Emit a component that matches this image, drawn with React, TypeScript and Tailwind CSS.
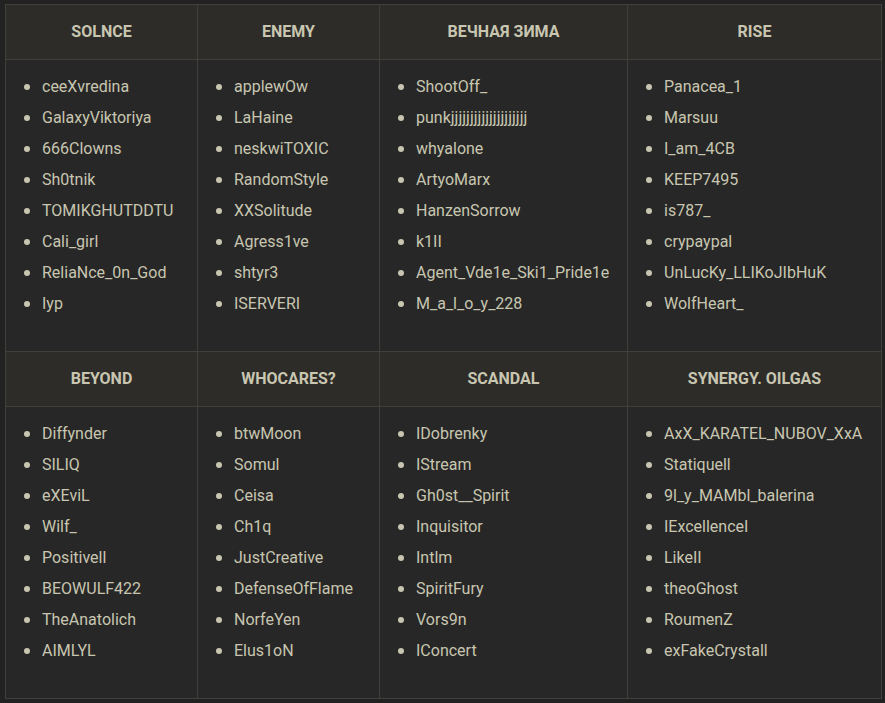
import React from "react";

interface Team {
  name: string;
  players: string[];
}

const ROWS: Team[][] = [
  [
    {
      name: "SOLNCE",
      players: ["ceeXvredina", "GalaxyViktoriya", "666Clowns", "Sh0tnik", "TOMIKGHUTDDTU", "Cali_girl", "ReliaNce_0n_God", "Iyp"],
    },
    {
      name: "ENEMY",
      players: ["applewOw", "LaHaine", "neskwiTOXIC", "RandomStyle", "XXSolitude", "Agress1ve", "shtyr3", "ISERVERI"],
    },
    {
      name: "ВЕЧНАЯ ЗИМА",
      players: ["ShootOff_", "punk" + "j".repeat(20), "whyalone", "ArtyoMarx", "HanzenSorrow", "k1II", "Agent_Vde1e_Ski1_Pride1e", "M_a_l_o_y_228"],
    },
    {
      name: "RISE",
      players: ["Panacea_1", "Marsuu", "I_am_4CB", "KEEP7495", "is787_", "crypaypal", "UnLucKy_LLIKoJIbHuK", "WolfHeart_"],
    },
  ],
  [
    {
      name: "BEYOND",
      players: ["Diffynder", "SILIQ", "eXEviL", "Wilf_", "Positivell", "BEOWULF422", "TheAnatolich", "AIMLYL"],
    },
    {
      name: "WHOCARES?",
      players: ["btwMoon", "Somul", "Ceisa", "Ch1q", "JustCreative", "DefenseOfFlame", "NorfeYen", "Elus1oN"],
    },
    {
      name: "SCANDAL",
      players: ["IDobrenky", "IStream", "Gh0st__Spirit", "Inquisitor", "Intlm", "SpiritFury", "Vors9n", "IConcert"],
    },
    {
      name: "SYNERGY. OILGAS",
      players: ["AxX_KARATEL_NUBOV_XxA", "Statiquell", "9l_y_MAMbl_balerina", "IExcellenceI", "LikeII", "theoGhost", "RoumenZ", "exFakeCrystall"],
    },
  ],
];

const COL_WIDTHS = ["w-[192px]", "w-[182px]", "w-[248px]", "w-[254px]"];

export default function App() {
  return (
    <div className="min-h-screen bg-[#222222] pl-[5px] pt-[4px] font-['Roboto','Liberation_Sans',sans-serif] text-[#c8c6b0]">
      <div className="w-[877px] border-l border-t border-[#403f3a]">
        {ROWS.map((row, ri) => (
          <div key={ri} className="flex flex-col">
            {/* Header row */}
            <div className="flex">
              {row.map((team, ci) => (
                <div
                  key={team.name}
                  className={`${COL_WIDTHS[ci]} h-[55px] flex items-center justify-center border-r border-b border-[#403f3a] bg-[#2d2c29] text-[16px] font-bold`}
                >
                  {team.name}
                </div>
              ))}
            </div>
            {/* Players row */}
            <div className="flex">
              {row.map((team, ci) => (
                <div
                  key={team.name}
                  className={`${COL_WIDTHS[ci]} h-[292px] border-r border-b border-[#403f3a] bg-[#272727] pt-[11px]`}
                >
                  <ul className="flex flex-col">
                    {team.players.map((p) => (
                      <li key={p} className="flex items-center pl-[18px] text-[16px] leading-[31px] whitespace-nowrap">
                        <span className="mt-[1px] mr-[12px] h-[6px] w-[6px] shrink-0 rounded-full bg-[#c8c6b0]" />
                        {p}
                      </li>
                    ))}
                  </ul>
                </div>
              ))}
            </div>
          </div>
        ))}
      </div>
    </div>
  );
}
